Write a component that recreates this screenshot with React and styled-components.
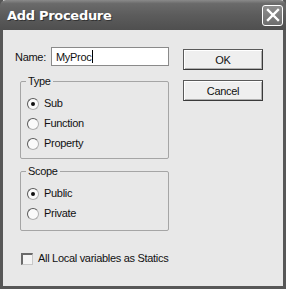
import * as React from "react";
import styled, { createGlobalStyle } from "styled-components";

const GlobalStyle = createGlobalStyle`
    html, body {
        margin: 0;
        padding: 0;
        background: #ffffff;
    }
    body {
        font-family: "Liberation Sans", Arial, sans-serif;
        font-size: 11px;
        letter-spacing: -0.3px;
        color: #111;
    }
`;

function RadioOption({ label, checked }) {
    return (
        <OptionRow>
            <RadioDot checked={checked} />
            <OptionText>{label}</OptionText>
        </OptionRow>
    );
}

function App() {
    return (
        <>
            <GlobalStyle />
            <Window>
                <TitleBar>
                    <TitleText>Add Procedure</TitleText>
                    <CloseButton>
                        <svg width="14" height="14" viewBox="0 0 14 14">
                            <path
                                d="M2 2 L12 12 M12 2 L2 12"
                                stroke="#fff"
                                strokeWidth="2.4"
                                strokeLinecap="square"
                            />
                        </svg>
                    </CloseButton>
                </TitleBar>
                <Body>
                    <LeftColumn>
                        <NameRow>
                            <NameLabel>Name:</NameLabel>
                            <NameInput>
                                MyProc<Caret />
                            </NameInput>
                        </NameRow>
                        <Group height={78} top={15}>
                            <Legend>Type</Legend>
                            <RadioOption label="Sub" checked />
                            <RadioOption label="Function" />
                            <RadioOption label="Property" />
                        </Group>
                        <Group height={60} top={12}>
                            <Legend>Scope</Legend>
                            <RadioOption label="Public" checked />
                            <RadioOption label="Private" />
                        </Group>
                        <CheckRow>
                            <CheckBox />
                            <OptionText>All Local variables as Statics</OptionText>
                        </CheckRow>
                    </LeftColumn>
                    <RightColumn>
                        <Button>OK</Button>
                        <Button>Cancel</Button>
                    </RightColumn>
                </Body>
            </Window>
        </>
    );
}

const Window = styled.div`
    width: 286px;
    height: 289px;
    box-sizing: border-box;
    border: 3px solid #575757;
    border-top: none;
    display: flex;
    flex-direction: column;
    background: #e8e8e8;
`;

const TitleBar = styled.div`
    height: 30px;
    margin: 0 -3px;
    padding: 0 3px 0 7px;
    display: flex;
    align-items: center;
    justify-content: space-between;
    background: linear-gradient(#8a8a8a 0%, #6a6a6a 12%, #5c5c5c 50%, #4f4f4f 100%);
    border-top-left-radius: 6px;
    border-top-right-radius: 6px;
`;

const TitleText = styled.span`
    color: #fff;
    font-family: "DejaVu Sans", sans-serif;
    font-weight: bold;
    font-size: 13px;
    letter-spacing: -0.3px;
    text-shadow: 1px 1px 0 #333;
`;

const CloseButton = styled.div`
    width: 21px;
    height: 21px;
    box-sizing: border-box;
    border: 1px solid #fff;
    border-radius: 3px;
    background: linear-gradient(#8d8d8d, #6e6e6e);
    display: flex;
    align-items: center;
    justify-content: center;
`;

const Body = styled.div`
    flex: 1;
    display: flex;
    padding: 17px 20px 0 12px;
    gap: 14px;
`;

const LeftColumn = styled.div`
    display: flex;
    flex-direction: column;
    width: 156px;
`;

const NameRow = styled.div`
    display: flex;
    align-items: center;
    gap: 3px;
`;

const NameLabel = styled.span`
    width: 33px;
`;

const NameInput = styled.div`
    flex: 1;
    height: 19px;
    box-sizing: border-box;
    border: 1px solid #8a8a8a;
    background: #fff;
    display: flex;
    align-items: center;
    padding-left: 4px;
`;

const Caret = styled.span`
    display: inline-block;
    width: 1px;
    height: 13px;
    background: #000;
    margin-left: 1px;
`;

const Group = styled.div`
    position: relative;
    margin: ${(p) => p.top}px 0 0 5px;
    width: 149px;
    height: ${(p) => p.height}px;
    box-sizing: border-box;
    border: 1px solid #a5a5a5;
    border-radius: 2px;
    padding: 15px 0 0 6px;
    display: flex;
    flex-direction: column;
    gap: 7px;
`;

const Legend = styled.span`
    position: absolute;
    top: -7px;
    left: 5px;
    padding: 0 2px;
    background: #e8e8e8;
    line-height: 13px;
`;

const OptionRow = styled.div`
    display: flex;
    align-items: center;
    gap: 5px;
    height: 13px;
`;

const RadioDot = styled.span`
    flex-shrink: 0;
    width: 12px;
    height: 12px;
    box-sizing: border-box;
    border-radius: 50%;
    background: #fafafa;
    border: 1px solid #b0b0b0;
    border-left-color: #5a5a5a;
    border-top-color: #5a5a5a;
    display: flex;
    align-items: center;
    justify-content: center;
    &::after {
        content: "";
        width: 4px;
        height: 4px;
        border-radius: 50%;
        background: ${(p) => (p.checked ? "#111" : "transparent")};
    }
`;

const OptionText = styled.span`
    line-height: 13px;
    white-space: nowrap;
`;

const CheckRow = styled.div`
    display: flex;
    align-items: center;
    gap: 5px;
    margin: 21px 0 0 6px;
`;

const CheckBox = styled.span`
    flex-shrink: 0;
    width: 12px;
    height: 12px;
    box-sizing: border-box;
    background: #f4f4f4;
    border: 1px solid #c8c8c8;
    border-left: 2px solid #6a6a6a;
    border-top: 2px solid #6a6a6a;
`;

const RightColumn = styled.div`
    display: flex;
    flex-direction: column;
    gap: 10px;
    padding-top: 2px;
`;

const Button = styled.div`
    width: 80px;
    height: 21px;
    box-sizing: border-box;
    border: 1px solid #5a5a5a;
    border-right-color: #3a3a3a;
    border-bottom-color: #3a3a3a;
    box-shadow: inset 1px 1px 0 #ffffff, inset -1px -1px 0 #b0b0b0;
    background: #efefef;
    display: flex;
    align-items: center;
    justify-content: center;
`;

export default App;
